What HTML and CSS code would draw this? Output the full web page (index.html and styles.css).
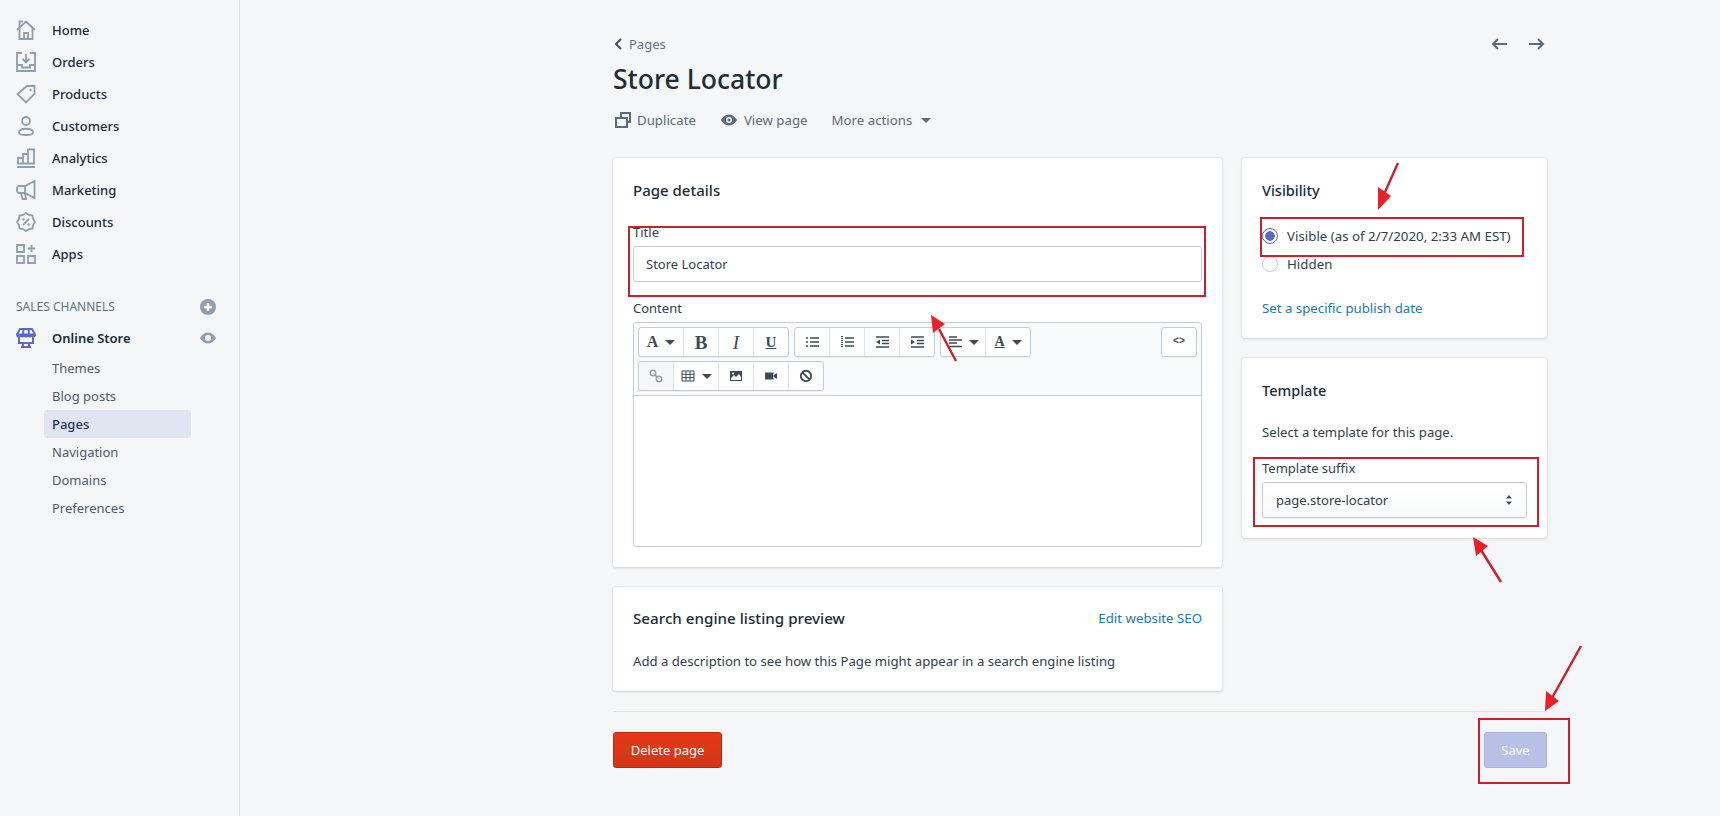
FILE: index.html
```html
<!DOCTYPE html>
<html lang="en">
<head>
  <meta charset="UTF-8" />
  <title>Store Locator - Pages</title>
  <link rel="stylesheet" href="styles.css">
</head>
<body>

  <aside class="sidebar">
    <ul class="nav">
      <li class="nav-item"><svg class="nav-icon" viewBox="0 0 20 20"><path d="M1 10 10 1.5 19 10M3.5 8v11h13V8M8 19v-6h4v6M3.5 7V1.5H7"/></svg>Home</li>
      <li class="nav-item"><svg class="nav-icon" viewBox="0 0 20 20"><path d="M6 1H1v18h18V1h-5M1 13h5v2.500h8V13h5M10 2v8M6.500 7l3.500 3.500L13.500 7"/></svg>Orders</li>
      <li class="nav-item"><svg class="nav-icon" viewBox="0 0 20 20"><path d="M1.500 10 11 2h7.500v8L10 18.500z"/><circle class="fill-icon" cx="14.500" cy="6" r="1.200"/></svg>Products</li>
      <li class="nav-item"><svg class="nav-icon" viewBox="0 0 20 20"><circle cx="10" cy="5" r="4"/><path d="M3 16.500c0-5 14-5 14 0 0 2-2 2.500-7 2.500s-7-.5-7-2.500z"/></svg>Customers</li>
      <li class="nav-item"><svg class="nav-icon" viewBox="0 0 20 20"><path d="M1 19h18M2 15.500V10h5v5.500zM7 15.500V6h5v9.500zM12 15.500V1.500h6v14z"/></svg>Analytics</li>
      <li class="nav-item"><svg class="nav-icon" viewBox="0 0 20 20"><path d="M18.500 1 9 6H2.500L1 8v3l1.500 2H9l9.500 5zM9 6v7M5 13l1.500 6H10l-1-6"/></svg>Marketing</li>
      <li class="nav-item"><svg class="nav-icon" viewBox="0 0 20 20"><path d="M10 1l3 2 3.500.5L17 7l2 3-2 3-.5 3.500L13 17l-3 2-3-2-3.500-.5L3 13l-2-3 2-3 .5-3.500L7 3zM13 7l-6 6"/><circle class="fill-icon" cx="7.500" cy="7.500" r="1.200"/><circle class="fill-icon" cx="12.500" cy="12.500" r="1.200"/></svg>Discounts</li>
      <li class="nav-item"><svg class="nav-icon" viewBox="0 0 20 20"><path d="M1 1h7v7H1zM1 12h7v7H1zM12 12h7v7h-7zM15.500 1v7M12 4.500h7"/></svg>Apps</li>
    </ul>

    <div class="channels-head">
      <span>SALES CHANNELS</span>
      <svg class="side-action" viewBox="0 0 16 16"><circle class="fill-grey" cx="8" cy="8" r="8"/><path class="stroke-white" d="M8 4v8M4 8h8"/></svg>
    </div>

    <div class="nav-item nav-store">
      <svg class="nav-icon store-icon" viewBox="0 0 20 20"><path d="M4 1h12l3 5.500c0 2.500-3.500 2.500-3.500 0 0 2.500-3.500 2.500-3.500 0 0 2.500-4 2.500-4 0 0 2.500-3.500 2.500-3.500 0C4.500 9 1 9 1 6.500zM1 6.500h18M7.500 1 7 6.500M12.500 1l.5 5.500M3 9.500V15h14V9.500M7 15v4M13 15v4M5 19h10"/></svg>
      <span class="store-name">Online Store</span>
      <svg class="side-action eye" viewBox="0 0 16 16"><path class="fill-grey" d="M8 2.500C4 2.500 1 6 0 8c1 2 4 5.500 8 5.500S15 10 16 8c-1-2-4-5.500-8-5.500z"/><circle class="fill-side" cx="8" cy="8" r="3"/></svg>
    </div>

    <ul class="subnav">
      <li>Themes</li>
      <li>Blog posts</li>
      <li class="current">Pages</li>
      <li>Navigation</li>
      <li>Domains</li>
      <li>Preferences</li>
    </ul>
  </aside>

  <main class="page">
    <div class="crumbs">
      <a class="crumb-back"><svg class="chevron" viewBox="0 0 10 14"><path d="M8 2 3 7l5 5"/></svg>Pages</a>
      <div class="pager">
        <svg class="pager-arrow" viewBox="0 0 16 14"><path d="M16 7H2M7 2 2 7l5 5"/></svg>
        <svg class="pager-arrow" viewBox="0 0 16 14"><path d="M0 7h14M9 2l5 5-5 5"/></svg>
      </div>
    </div>

    <h1 class="page-title">Store Locator</h1>

    <div class="actions">
      <span class="action"><svg class="action-icon" viewBox="0 0 16 16"><path class="fill-slate" d="M5 0h11v11h-3v5H0V5h5zm2 2v3h6v4h1V2zM2 7v7h9V7z"/></svg>Duplicate</span>
      <span class="action"><svg class="action-icon eye-icon" viewBox="0 0 16 16"><path class="fill-slate" d="M8 2.500C4 2.500 1 6 0 8c1 2 4 5.500 8 5.500S15 10 16 8c-1-2-4-5.500-8-5.500z"/><circle class="fill-page" cx="8" cy="8" r="3"/><circle class="fill-slate" cx="8" cy="8" r="1.500"/></svg>View page</span>
      <span class="action">More actions<i class="caret caret-more"></i></span>
    </div>

    <div class="columns">
      <div class="col-main">
        <section class="card">
          <h2 class="details-title">Page details</h2>
          <label class="field-label first">Title</label>
          <div class="input">Store Locator</div>
          <label class="field-label content-label">Content</label>
          <div class="editor">
            <div class="toolbar">
              <div class="tool-rows">
                <div class="tool-row">
                  <div class="tool-group">
                    <span class="tool wide"><b class="glyph">A</b><i class="caret"></i></span>
                    <span class="tool"><b class="glyph big">B</b></span>
                    <span class="tool"><i class="glyph italic">I</i></span>
                    <span class="tool"><u class="glyph under">U</u></span>
                  </div>
                  <div class="tool-group">
                    <span class="tool"><svg class="tool-icon" viewBox="0 0 14 12"><path d="M5 2h9M5 6h9M5 10h9M1 2h2M1 6h2M1 10h2"/></svg></span>
                    <span class="tool"><svg class="tool-icon" viewBox="0 0 14 12"><path d="M5 2h9M5 6h9M5 10h9"/><path class="dotted" d="M2 0v12"/></svg></span>
                    <span class="tool"><svg class="tool-icon" viewBox="0 0 14 12"><path d="M1 1h13M7 4.500h7M7 7.500h7M1 11h13"/><path class="fill-dark" d="M5 3.500v5L1 6z"/></svg></span>
                    <span class="tool"><svg class="tool-icon" viewBox="0 0 14 12"><path d="M1 1h13M7 4.500h7M7 7.500h7M1 11h13"/><path class="fill-dark" d="M1 3.500v5L5 6z"/></svg></span>
                  </div>
                  <div class="tool-group">
                    <span class="tool wide"><svg class="tool-icon" viewBox="0 0 14 12"><path d="M1 1h8M1 4h13M1 7h8M1 10.500h13"/></svg><i class="caret"></i></span>
                    <span class="tool wide"><u class="glyph color">A</u><i class="caret"></i></span>
                  </div>
                </div>
                <div class="tool-row">
                  <div class="tool-group">
                    <span class="tool on"><svg class="tool-icon link-icon" viewBox="0 0 14 14"><circle cx="4" cy="4" r="2.700"/><circle cx="10" cy="10" r="2.700"/><path d="M5.500 5.500l3 3"/></svg></span>
                    <span class="tool wide"><svg class="tool-icon thin" viewBox="0 0 14 12"><path d="M1 1h12v10H1zM1 4.300h12M1 7.600h12M5 1v10M9 1v10"/></svg><i class="caret"></i></span>
                    <span class="tool"><svg class="tool-icon" viewBox="0 0 14 12"><path class="fill-dark" d="M1 1h12v10H1z"/><path class="fill-toolbar" d="M2 8 5 5l2 2 3-3 2 3v3H2z"/><circle class="fill-toolbar" cx="4" cy="3.500" r="1"/></svg></span>
                    <span class="tool"><svg class="tool-icon" viewBox="0 0 14 12"><path class="fill-dark" d="M1 2.500h8.500v7H1zM10 5l3-2v6l-3-2z"/></svg></span>
                    <span class="tool"><svg class="tool-icon block-icon" viewBox="0 0 14 14"><circle cx="7" cy="7" r="5.200"/><path d="M3.300 3.300l7.400 7.400"/></svg></span>
                  </div>
                </div>
              </div>
              <div class="tool-group code-group"><span class="tool"><span class="code-glyph">&lt;&gt;</span></span></div>
            </div>
            <div class="editor-body"></div>
          </div>
        </section>

        <section class="card seo-card">
          <div class="seo-head">
            <h2>Search engine listing preview</h2>
            <a class="link">Edit website SEO</a>
          </div>
          <p class="seo-text">Add a description to see how this Page might appear in a search engine listing</p>
        </section>
      </div>

      <div class="col-side">
        <section class="card">
          <h2>Visibility</h2>
          <div class="radios">
            <div class="radio-row"><span class="radio checked"></span>Visible (as of 2/7/2020, 2:33 AM EST)</div>
            <div class="radio-row"><span class="radio"></span>Hidden</div>
          </div>
          <a class="link publish-link">Set a specific publish date</a>
        </section>

        <section class="card">
          <h2>Template</h2>
          <p class="template-text">Select a template for this page.</p>
          <label class="field-label suffix-label">Template suffix</label>
          <div class="select">page.store-locator
            <svg class="updown" viewBox="0 0 8 12"><path d="M4 1 7 4.500H1zM4 11 1 7.500h6z"/></svg>
          </div>
        </section>
      </div>
    </div>

    <div class="footer-bar">
      <button class="btn btn-delete">Delete page</button>
      <button class="btn btn-save">Save</button>
    </div>
  </main>

  <!-- screenshot annotations drawn on top of the page -->
  <div class="mark mark-title"></div>
  <div class="mark mark-visible"></div>
  <div class="mark mark-suffix"></div>
  <div class="mark mark-save"></div>
  <svg class="arrows" viewBox="0 0 1720 816">
    <path d="M956 361 939 329"/>
    <path class="head" d="M931 315 945 324 933 333z"/>
    <path d="M1398 163 1385 192"/>
    <path class="head" d="M1378 210 1378 187 1391 196z"/>
    <path d="M1501 582 1481 550"/>
    <path class="head" d="M1473 537 1488 546 1476 556z"/>
    <path d="M1581 646 1552 698"/>
    <path class="head" d="M1545 711 1546 691 1559 701z"/>
  </svg>

</body>
</html>
```

FILE: styles.css
```css
* {
  box-sizing: border-box;
}

html, body {
  height: 100%;
}

body {
  margin: 0;
  display: flex;
  overflow: hidden;
  background-color: #f4f6f8;
  color: #333e49;
  font-family: 'Noto Sans', 'Open Sans', sans-serif;
  font-size: 13px;
  line-height: 20px;
}

ul {
  list-style: none;
  margin: 0;
  padding: 0;
}

h1, h2, p {
  margin: 0;
}

/* sidebar */
.sidebar {
  width: 240px;
  flex: none;
  padding-top: 14px;
  border-right: 1px solid #dfe3e8;
}

.nav-item {
  display: flex;
  align-items: center;
  height: 32px;
  padding-left: 16px;
  color: #212b36;
  font-weight: 500;
}

.nav-icon {
  width: 20px;
  height: 20px;
  margin-right: 16px;
  fill: none;
  stroke: #919eab;
  stroke-width: 1.8;
}

.fill-icon {
  fill: #919eab;
  stroke: none;
}

.channels-head {
  display: flex;
  align-items: center;
  justify-content: space-between;
  height: 20px;
  margin-top: 27px;
  margin-bottom: 5px;
  padding: 0 23px 0 16px;
  color: #637381;
  font-size: 12px;
}

.side-action {
  width: 16px;
  height: 16px;
}

.fill-grey { fill: #919eab; }
.fill-side { fill: #f4f6f8; }
.fill-slate { fill: #5c6b79; }
.fill-page { fill: #f4f6f8; }
.fill-dark { fill: #3e4a56; stroke: none; }
.fill-toolbar { fill: #f9fafb; stroke: none; }

.stroke-white {
  stroke: #fff;
  stroke-width: 2.4;
}

.nav-store {
  padding-right: 23px;
}

.store-icon {
  stroke: #5c6ac4;
  stroke-width: 2;
}

.store-name {
  flex: 1;
  font-weight: 600;
}

.subnav li {
  height: 28px;
  margin-left: 44px;
  margin-right: 48px;
  padding-left: 8px;
  color: #515b66;
  line-height: 28px;
}

.subnav .current {
  background-color: #e0e5f1;
  border-radius: 3px;
  color: #202e78;
  font-weight: 500;
}

/* page */
.page {
  width: 934px;
  margin-left: 373px;
  padding-top: 34px;
}

.crumbs {
  display: flex;
  justify-content: space-between;
  align-items: center;
  height: 20px;
}

.crumb-back {
  display: flex;
  align-items: center;
  color: #637381;
}

.chevron {
  width: 10px;
  height: 14px;
  margin-right: 6px;
  fill: none;
  stroke: #454f5b;
  stroke-width: 2;
}

.pager {
  display: flex;
  gap: 22px;
  padding-right: 2px;
}

.pager-arrow {
  width: 16px;
  height: 14px;
  fill: none;
  stroke: #5c6b79;
  stroke-width: 2;
}

.page-title {
  margin-top: 7px;
  color: #212b36;
  font-size: 26.5px;
  font-weight: 500;
  line-height: 36px;
}

.actions {
  display: flex;
  gap: 24px;
  margin-top: 13px;
  color: #5c6b79;
  font-size: 13.25px;
}

.action {
  display: flex;
  align-items: center;
}

.action-icon {
  width: 16px;
  height: 16px;
  margin-left: 2px;
  margin-right: 6px;
}

.eye-icon {
  margin-left: 1px;
  margin-right: 7px;
}

.caret {
  display: inline-block;
  width: 0;
  height: 0;
  margin-left: 7px;
  border-left: 5px solid transparent;
  border-right: 5px solid transparent;
  border-top: 5px solid #3e4a56;
}

.caret-more {
  margin-left: 9px;
  border-top-color: #5c6b79;
}

.columns {
  display: flex;
  gap: 20px;
  margin-top: 28px;
}

.col-main {
  width: 609px;
  display: flex;
  flex-direction: column;
  gap: 20px;
}

.col-side {
  width: 305px;
  display: flex;
  flex-direction: column;
  gap: 20px;
  align-self: flex-start;
}

.card {
  padding: 20px;
  background-color: #fff;
  border-radius: 3px;
  box-shadow: 0 0 0 1px rgba(63, 63, 68, 0.05), 0 1px 3px 0 rgba(63, 63, 68, 0.15);
}

.card h2 {
  color: #212b36;
  font-size: 14.5px;
  font-weight: 500;
  line-height: 24px;
}

.card .details-title {
  font-size: 15px;
}

.field-label {
  display: block;
}

.field-label.first {
  margin-top: 20px;
}

.content-label {
  margin-top: 16px;
}

.input {
  height: 36px;
  margin-top: 4px;
  padding-left: 12px;
  border: 1px solid #c4cdd5;
  border-radius: 3px;
  line-height: 34px;
}

.editor {
  height: 225px;
  margin-top: 4px;
  display: flex;
  flex-direction: column;
  border: 1px solid #c4cdd5;
  border-radius: 3px;
}

.toolbar {
  height: 73px;
  flex: none;
  display: flex;
  justify-content: space-between;
  padding: 4px 4px 0 4px;
  background-color: #f9fafb;
  border-bottom: 1px solid #c4cdd5;
  border-radius: 3px 3px 0 0;
}

.tool-rows {
  display: flex;
  flex-direction: column;
  gap: 4px;
}

.tool-row {
  display: flex;
  gap: 5px;
}

.tool-group {
  display: flex;
  height: 30px;
  background-color: #fff;
  border: 1px solid #c4cdd5;
  border-radius: 3px;
  box-shadow: 0 1px 0 rgba(22, 29, 37, 0.05);
}

.tool {
  width: 35px;
  display: flex;
  align-items: center;
  justify-content: center;
  border-left: 1px solid #dfe3e8;
}

.tool.wide {
  width: 45px;
}

/* the group border takes the place of the first divider */
.tool:first-child {
  width: 34px;
  border-left: 0;
}

.tool.wide:first-child {
  width: 44px;
}

.tool.on {
  background-color: #f4f6f8;
  border-radius: 3px 0 0 3px;
}

.glyph {
  color: #3e4a56;
  font-family: 'Liberation Serif', serif;
  font-size: 16px;
  line-height: 1;
}

.glyph.big {
  font-size: 19px;
}

.glyph.italic {
  font-size: 19px;
}

.glyph.under {
  font-size: 15px;
  font-weight: bold;
}

.glyph.color {
  font-size: 14px;
  font-weight: bold;
}

.tool-icon {
  width: 14px;
  height: 12px;
  fill: none;
  stroke: #3e4a56;
  stroke-width: 1.6;
}

.tool-icon .dotted {
  stroke-width: 2;
  stroke-dasharray: 1 1;
}

.tool-icon.thin {
  stroke-width: 1;
}

.link-icon {
  height: 14px;
  stroke: #919eab;
}

.block-icon {
  height: 14px;
  stroke-width: 1.9;
}

.code-group .tool:first-child {
  width: 34px;
}

.code-glyph {
  color: #3e4a56;
  font-family: 'Liberation Mono', monospace;
  font-size: 10px;
  font-weight: bold;
}

.editor-body {
  flex: 1;
}

.seo-card {
  padding-top: 19px;
}

.seo-card h2 {
  font-size: 15.2px;
}

.seo-head {
  display: flex;
  justify-content: space-between;
  align-items: center;
}

.seo-text {
  margin-top: 21px;
  font-size: 13.15px;
}

.link {
  color: #1f76a8;
  font-size: 13.25px;
}

.radios {
  margin-top: 24px;
  display: flex;
  flex-direction: column;
  gap: 8px;
}

.radio-row {
  display: flex;
  align-items: center;
  font-size: 13.3px;
}

.radio {
  width: 16px;
  height: 16px;
  margin-right: 9px;
  border: 1px solid #c4cdd5;
  border-radius: 50%;
}

.radio.checked {
  border-color: #5c6ac4;
  background: radial-gradient(circle, #5c6ac4 0 4.5px, #fff 5px);
}

.publish-link {
  display: block;
  margin-top: 24px;
}

.template-text {
  margin-top: 20px;
  font-size: 13.15px;
}

.suffix-label {
  margin-top: 16px;
}

.select {
  display: flex;
  align-items: center;
  justify-content: space-between;
  height: 36px;
  margin-top: 4px;
  padding: 0 13px;
  background: linear-gradient(#fff, #f9fafb);
  border: 1px solid #c4cdd5;
  border-radius: 3px;
  box-shadow: 0 1px 0 rgba(22, 29, 37, 0.05);
}

.updown {
  width: 8px;
  height: 12px;
  fill: #454f5b;
}

.footer-bar {
  display: flex;
  justify-content: space-between;
  margin-top: 20px;
  padding-top: 20px;
  border-top: 1px solid #dfe3e8;
}

.btn {
  height: 36px;
  padding: 0 16px;
  border: 1px solid transparent;
  border-radius: 3px;
  color: #fff;
  font-family: inherit;
  font-size: 13px;
}

.btn-delete {
  width: 109px;
  background: linear-gradient(#e6391a, #d53417);
  border-color: #b02b13;
}

.btn-save {
  width: 63px;
  background-color: #b8c0e6;
  border-color: #a9b2dc;
}

/* annotations */
.mark {
  position: absolute;
  border: 2px solid #c8202f;
}

.mark-title {
  left: 628px;
  top: 226px;
  width: 578px;
  height: 71px;
}

.mark-visible {
  left: 1260px;
  top: 217px;
  width: 264px;
  height: 40px;
}

.mark-suffix {
  left: 1253px;
  top: 457px;
  width: 286px;
  height: 70px;
}

.mark-save {
  left: 1478px;
  top: 718px;
  width: 92px;
  height: 66px;
}

.arrows {
  position: absolute;
  left: 0;
  top: 0;
  width: 1720px;
  height: 816px;
  fill: none;
  stroke: #c8202f;
  stroke-width: 2.4;
  pointer-events: none;
}

.arrows .head {
  fill: #e8202a;
  stroke: none;
}
```
